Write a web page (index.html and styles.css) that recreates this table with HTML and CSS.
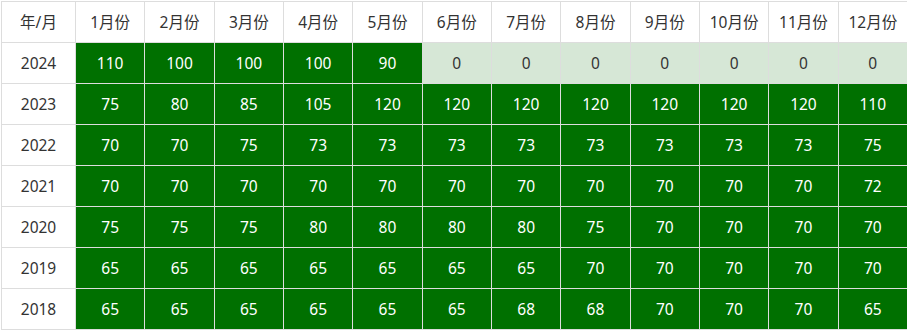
FILE: index.html
```html
<!DOCTYPE html>
<html lang="zh">
<head>
<meta charset="utf-8">
<link rel="stylesheet" href="styles.css">
</head>
<body>
<table class="grid">
<thead>
<tr><th class="year">年/月</th><th>1月份</th><th>2月份</th><th>3月份</th><th>4月份</th><th>5月份</th><th>6月份</th><th>7月份</th><th>8月份</th><th>9月份</th><th>10月份</th><th>11月份</th><th>12月份</th></tr>
</thead>
<tbody>
<tr><td class="year">2024</td><td class="g">110</td><td class="g">100</td><td class="g">100</td><td class="g">100</td><td class="g">90</td><td class="l">0</td><td class="l">0</td><td class="l">0</td><td class="l">0</td><td class="l">0</td><td class="l">0</td><td class="l">0</td></tr>
<tr><td class="year">2023</td><td class="g">75</td><td class="g">80</td><td class="g">85</td><td class="g">105</td><td class="g">120</td><td class="g">120</td><td class="g">120</td><td class="g">120</td><td class="g">120</td><td class="g">120</td><td class="g">120</td><td class="g">110</td></tr>
<tr><td class="year">2022</td><td class="g">70</td><td class="g">70</td><td class="g">75</td><td class="g">73</td><td class="g">73</td><td class="g">73</td><td class="g">73</td><td class="g">73</td><td class="g">73</td><td class="g">73</td><td class="g">73</td><td class="g">75</td></tr>
<tr><td class="year">2021</td><td class="g">70</td><td class="g">70</td><td class="g">70</td><td class="g">70</td><td class="g">70</td><td class="g">70</td><td class="g">70</td><td class="g">70</td><td class="g">70</td><td class="g">70</td><td class="g">70</td><td class="g">72</td></tr>
<tr><td class="year">2020</td><td class="g">75</td><td class="g">75</td><td class="g">75</td><td class="g">80</td><td class="g">80</td><td class="g">80</td><td class="g">80</td><td class="g">75</td><td class="g">70</td><td class="g">70</td><td class="g">70</td><td class="g">70</td></tr>
<tr><td class="year">2019</td><td class="g">65</td><td class="g">65</td><td class="g">65</td><td class="g">65</td><td class="g">65</td><td class="g">65</td><td class="g">65</td><td class="g">70</td><td class="g">70</td><td class="g">70</td><td class="g">70</td><td class="g">70</td></tr>
<tr><td class="year">2018</td><td class="g">65</td><td class="g">65</td><td class="g">65</td><td class="g">65</td><td class="g">65</td><td class="g">65</td><td class="g">68</td><td class="g">68</td><td class="g">70</td><td class="g">70</td><td class="g">70</td><td class="g">65</td></tr>
</tbody>
</table>
</body>
</html>
```
FILE: styles.css
```css
html, body {
  margin: 0;
  padding: 0;
  background: #fff;
}
body {
  padding: 1px 0 0 1px;
  font-family: "Noto Sans", "Noto Sans CJK SC", sans-serif;
  font-size: 15.5px;
  color: #333;
}
.grid {
  border-collapse: collapse;
  table-layout: fixed;
  width: 907px;
}
.grid th, .grid td {
  border: 1px solid #ddd;
  height: 40px;
  padding: 0;
  text-align: center;
  vertical-align: middle;
  font-weight: normal;
  line-height: 20px;
}
.grid .year {
  width: 73px;
}
.grid td.g {
  background: #007000;
  color: #fff;
}
.grid td.l {
  background: #d6e7d6;
}
```
